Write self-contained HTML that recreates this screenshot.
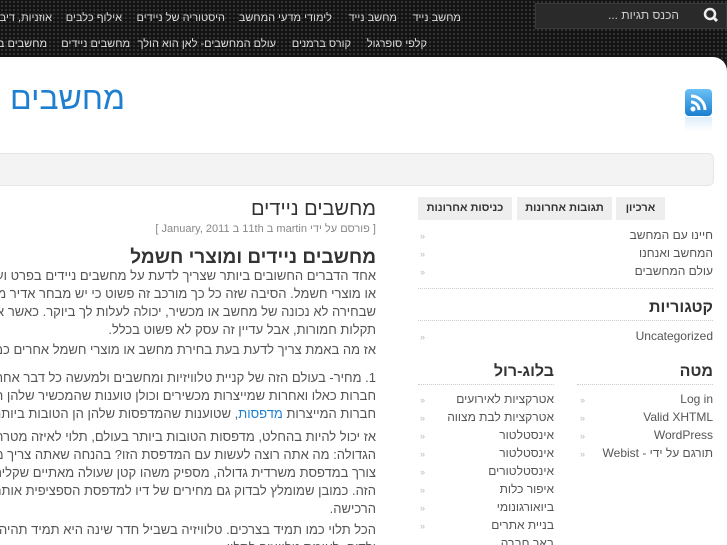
<!DOCTYPE html>
<html><head><meta charset="utf-8"><style>
*{margin:0;padding:0;box-sizing:border-box}
body{width:727px;height:545px;overflow:hidden;position:relative;background:#1a1a1a;font-family:"Liberation Sans","Noto Sans CJK SC",sans-serif;font-size:12px;color:#444}
.top{position:absolute;left:0;top:0;width:727px;height:60px;background:radial-gradient(circle,#333 1px,#111 1.5px) 0 0/4px 4px}
.a{position:absolute;white-space:nowrap;direction:rtl}
.nav{color:#ddd;font-size:11px}
.panel{position:absolute;left:0;top:57px;width:727px;height:488px;background:#fff;border-radius:0 14px 0 0}
.bar{position:absolute;left:0;top:153px;width:714px;height:33px;background:#f3f3f3;border:1px solid #e6e6e6;border-left:none;border-radius:0 6px 6px 0}
.p{position:absolute;right:351px;width:376px;text-align:right;direction:rtl;font-size:13px;line-height:18px;color:#555;white-space:nowrap;overflow:hidden}
.tab{position:absolute;top:197px;height:23px;background:#eee;font-weight:bold;font-size:11px;color:#333;text-align:center;line-height:23px}
.li{position:absolute;font-size:12px;color:#555;direction:rtl;white-space:nowrap}
.ar{position:absolute;font-size:9px;color:#bbb}
.hr{position:absolute;height:0;border-top:1px dotted #ccc}
.h3{position:absolute;font-size:16px;font-weight:bold;color:#333;direction:rtl;white-space:nowrap}
.clip{position:absolute;left:0;top:0;width:727px;height:545px;overflow:hidden}
</style></head><body>
<div class="clip">
<div class="top"></div>
<div style="position:absolute;left:535px;top:3px;width:192px;height:26px;background:#2a2a2a;border:1px solid #3a3a3a"></div>
<div class="a" style="right:48px;top:8px;color:#ccc;font-size:12px">הכנס תגיות ...</div>
<svg style="position:absolute;left:703px;top:7px" width="16" height="16"><circle cx="7" cy="7" r="5" fill="none" stroke="#eee" stroke-width="2.5"/><path d="M10 10l4 4" stroke="#eee" stroke-width="3"/></svg>
<div class="a nav" style="right:266px;top:12px">מחשב נייד</div>
<div class="a nav" style="right:330px;top:12px">מחשב נייד</div>
<div class="a nav" style="right:395px;top:12px">לימודי מדעי המחשב</div>
<div class="a nav" style="right:502px;top:12px">היסטוריה של ניידים</div>
<div class="a nav" style="right:605px;top:12px">אילוף כלבים</div>
<div class="a nav" style="right:675px;top:12px">אוזניות, דיבורית</div>
<div class="a nav" style="right:300px;top:38px">קלפי סופרגול</div>
<div class="a nav" style="right:376px;top:38px">קורס ברמנים</div>
<div class="a nav" style="right:451px;top:38px">עולם המחשבים- לאן הוא הולך</div>
<div class="a nav" style="right:597px;top:38px">מחשבים ניידים</div>
<div class="a nav" style="right:680px;top:38px">מחשבים בעולם</div>
<div class="panel"></div>
<div class="a" style="left:10px;top:80px;font-size:32px;color:#1e7fd0">מחשבים</div>
<div style="position:absolute;left:685px;top:89px;width:27px;height:27px;border-radius:4px;background:linear-gradient(#6bc0f5,#1a7fd0)"></div>
<svg style="position:absolute;left:685px;top:89px" width="27" height="27"><circle cx="8" cy="20" r="2.5" fill="#fff"/><path d="M6 13a8 8 0 0 1 8 8M6 7a14 14 0 0 1 14 14" stroke="#fff" stroke-width="3" fill="none"/></svg>
<div style="position:absolute;left:685px;top:117px;width:27px;height:14px;background:linear-gradient(#cfe6f7,#fff);opacity:.7"></div>
<div class="bar"></div>
<div class="a" style="right:351px;top:198px;font-size:20px;color:#333">מחשבים ניידים</div>
<div class="a" style="right:351px;top:223px;font-size:11px;color:#888">[ פורסם על ידי martin ב 11th ב January, 2011 ]</div>
<div class="a" style="right:351px;top:247px;font-size:19px;font-weight:bold;color:#333">מחשבים ניידים ומוצרי חשמל</div>
<div class="p" style="top:267px">אחד הדברים החשובים ביותר שצריך לדעת על מחשבים ניידים בפרט ועל מוצרי חשמל<br>או מוצרי חשמל. הסיבה שזה כל כך מורכב זה פשוט כי יש מבחר אדיר מאוד של מוצרים<br>שבחירה לא נכונה של מחשב או מכשיר, יכולה לעלות לך ביוקר. כאשר אני מדבר<br>תקלות חמורות, אבל עדיין זה עסק לא פשוט בכלל.</div>
<div class="p" style="top:341px">אז מה באמת צריך לדעת בעת בחירת מחשב או מוצרי חשמל אחרים כמו טלוויזיות</div>
<div class="p" style="top:369px">1. מחיר- בעולם הזה של קניית טלוויזיות ומחשבים ולמעשה כל דבר אחר, יש מבחר<br>חברות כאלו ואחרות שמייצרות מכשירים וכולן טוענות שהמכשיר שלהן הוא הטוב<br>חברות המייצרות <span style="color:#1e7fd0">מדפסות</span>, שטוענות שהמדפסות שלהן הן הטובות ביותר בעולם.</div>
<div class="p" style="top:428px">אז יכול להיות בהחלט, מדפסות הטובות ביותר בעולם, תלוי לאיזה מטרה ולאיזה צורך<br>הגדולה: מה אתה רוצה לעשות עם המדפסת הזו? בהנחה שאתה צריך משהו קטן שיעשה<br>צורך במדפסת משרדית גדולה, מספיק משהו קטן שעולה מאתיים שקלים, זאת המטרה<br>הזה. כמובן שמומלץ לבדוק גם מחירים של דיו למדפסת הספציפית אותה אתם מעוניינים<br>הרכישה.</div>
<div class="p" style="top:521px">הכל תלוי כמו תמיד בצרכים. טלוויזיה בשביל חדר שינה היא תמיד תהיה שונה מטלוויזיה<br>ילדים, לעומת טלוויזיה לסלון.</div>
<div class="tab" style="left:616px;width:49px">ארכיון</div>
<div class="tab" style="left:517px;width:95px">תגובות אחרונות</div>
<div class="tab" style="left:418px;width:94px">כניסות אחרונות</div>
<div class="li" style="right:14px;top:228px">חיינו עם המחשב</div>
<div class="li" style="right:14px;top:246px">המחשב ואנחנו</div>
<div class="li" style="right:14px;top:264px">עולם המחשבים</div>
<div class="ar" style="left:420px;top:231px">»</div><div class="ar" style="left:420px;top:249px">»</div><div class="ar" style="left:420px;top:267px">»</div>
<div class="hr" style="left:418px;width:295px;top:288px"></div>
<div class="h3" style="right:14px;top:299px">קטגוריות</div>
<div class="hr" style="left:418px;width:295px;top:320px"></div>
<div class="li" style="right:14px;top:329px">Uncategorized</div>
<div class="ar" style="left:420px;top:332px">»</div>
<div class="h3" style="right:14px;top:363px">מטה</div>
<div class="hr" style="left:577px;width:136px;top:384px"></div>
<div class="h3" style="right:173px;top:363px">בלוג-רול</div>
<div class="hr" style="left:418px;width:136px;top:384px"></div>
<div class="li" style="right:14px;top:392px">Log in</div>
<div class="li" style="right:14px;top:410px">Valid XHTML</div>
<div class="li" style="right:14px;top:428px">WordPress</div>
<div class="li" style="right:14px;top:446px">תורגם על ידי - Webist</div>
<div class="ar" style="left:580px;top:395px">»</div><div class="ar" style="left:580px;top:413px">»</div><div class="ar" style="left:580px;top:431px">»</div><div class="ar" style="left:580px;top:449px">»</div>
<div class="li" style="right:173px;top:392px">אטרקציות לאירועים</div>
<div class="li" style="right:173px;top:410px">אטרקציות לבת מצווה</div>
<div class="li" style="right:173px;top:428px">אינסטלטור</div>
<div class="li" style="right:173px;top:446px">אינסטלטור</div>
<div class="li" style="right:173px;top:464px">אינסטלטורים</div>
<div class="li" style="right:173px;top:482px">איפור כלות</div>
<div class="li" style="right:173px;top:500px">ביואורגונומי</div>
<div class="li" style="right:173px;top:518px">בניית אתרים</div>
<div class="li" style="right:173px;top:536px">באר חברה</div>
<div class="ar" style="left:420px;top:395px">»</div><div class="ar" style="left:420px;top:413px">»</div><div class="ar" style="left:420px;top:431px">»</div><div class="ar" style="left:420px;top:449px">»</div><div class="ar" style="left:420px;top:467px">»</div><div class="ar" style="left:420px;top:485px">»</div><div class="ar" style="left:420px;top:503px">»</div><div class="ar" style="left:420px;top:521px">»</div>
</div>
</body></html>
